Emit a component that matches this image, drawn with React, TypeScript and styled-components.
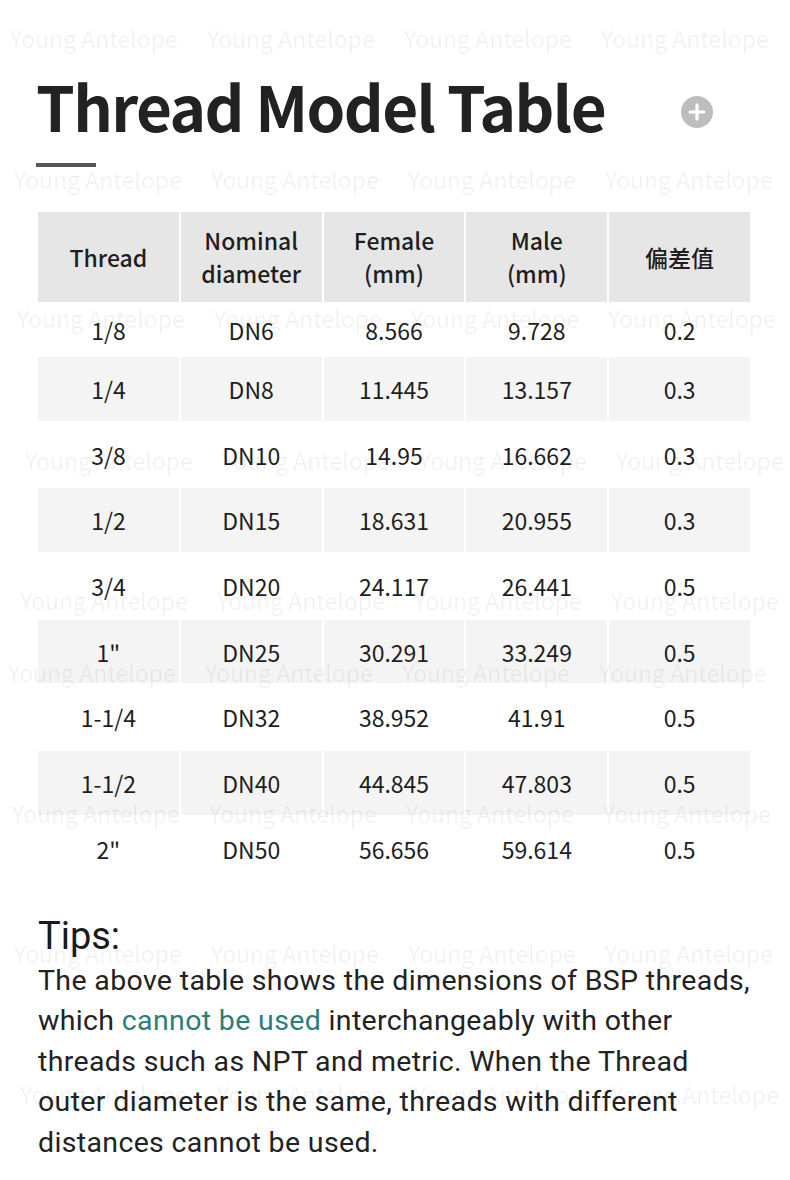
import React from 'react';
import styled, { createGlobalStyle } from 'styled-components';

const Global = createGlobalStyle`
  html, body { margin: 0; padding: 0; background: #fff; }
  body { font-family: "Noto Sans CJK SC", "Noto Sans", sans-serif; color: #1c1c1c; }
`;

const Page = styled.div`
  position: relative;
  width: 790px;
  height: 1180px;
  overflow: hidden;
  box-sizing: border-box;
  padding: 74px 0 0 36px;
`;

const TitleRow = styled.div`
  width: 677px;
  display: flex;
  justify-content: space-between;
  align-items: flex-start;
`;

const Title = styled.h1`
  margin: 0;
  font-family: "Noto Sans CJK SC", sans-serif;
  font-weight: 700;
  font-size: 62px;
  line-height: 63px;
  color: #222;
  letter-spacing: -1.6px;
`;

const PlusBadge = styled.div`
  width: 32px;
  height: 32px;
  margin-top: 22px;
  border-radius: 50%;
  background: #bdbdbd;
  display: flex;
  align-items: center;
  justify-content: center;
`;

const Bar = styled.div`
  width: 60px;
  height: 4px;
  margin-top: 26px;
  background: #555;
`;

const Table = styled.div`
  margin: 45px 0 0 2px;
  width: 712px;
  display: grid;
  grid-template-columns: repeat(5, 1fr);
  grid-template-rows: 90px 51px repeat(8, 63.7px);
  gap: 2px;
`;

const HeadCell = styled.div`
  background: #e6e6e6;
  display: flex;
  align-items: center;
  justify-content: center;
  text-align: center;
  font-size: 23px;
  line-height: 33px;
  font-weight: 500;
  color: #1e1e1e;
`;

const Cell = styled.div<{ $shade: boolean }>`
  background: ${(p) => (p.$shade ? '#f4f4f4' : '#fff')};
  display: flex;
  align-items: center;
  justify-content: center;
  font-size: 23px;
  font-weight: 400;
  color: #1e1e1e;
`;

const Tips = styled.div`
  margin: 30px 0 0 2px;
  font-family: Roboto, "Noto Sans", sans-serif;
  color: #1a1a1a;
`;

const TipsTitle = styled.div`
  font-size: 38px;
  line-height: 50px;
  font-weight: 400;
`;

const TipsText = styled.p`
  margin: 0;
  font-size: 28.5px;
  letter-spacing: 0.35px;
  line-height: 40.5px;
  font-weight: 400;
  white-space: nowrap;
  color: #222;
`;

const Accent = styled.span`
  color: #2b7d77;
`;

const Watermark = styled.div`
  position: absolute;
  inset: 0;
  pointer-events: none;
`;

const MarkRow = styled.div`
  position: absolute;
  left: 0;
  display: flex;
  gap: 32px;
`;

const Mark = styled.span`
  width: 165px;
  font-family: "Noto Sans CJK SC", sans-serif;
  font-size: 23px;
  line-height: 30px;
  color: rgba(0, 0, 0, 0.06);
  white-space: nowrap;
`;

const rows: [string, string, string, string, string][] = [
  ['1/8', 'DN6', '8.566', '9.728', '0.2'],
  ['1/4', 'DN8', '11.445', '13.157', '0.3'],
  ['3/8', 'DN10', '14.95', '16.662', '0.3'],
  ['1/2', 'DN15', '18.631', '20.955', '0.3'],
  ['3/4', 'DN20', '24.117', '26.441', '0.5'],
  ['1"', 'DN25', '30.291', '33.249', '0.5'],
  ['1-1/4', 'DN32', '38.952', '41.91', '0.5'],
  ['1-1/2', 'DN40', '44.845', '47.803', '0.5'],
  ['2"', 'DN50', '56.656', '59.614', '0.5'],
];

const marks: [number, number][] = [
  [23, 10], [164, 14], [303, 17], [445, 25], [585, 20], [657, 8], [798, 12], [938, 14], [1079, 20],
];

export default function App() {
  return (
    <>
      <Global />
      <Page>
        <TitleRow>
          <Title>Thread Model Table</Title>
          <PlusBadge>
            <svg width="18" height="18" viewBox="0 0 18 18">
              <path d="M9 2v14M2 9h14" stroke="#fff" strokeWidth="3.2" strokeLinecap="round" />
            </svg>
          </PlusBadge>
        </TitleRow>
        <Bar />
        <Table>
          <HeadCell>Thread</HeadCell>
          <HeadCell>Nominal<br />diameter</HeadCell>
          <HeadCell>Female<br />(mm)</HeadCell>
          <HeadCell>Male<br />(mm)</HeadCell>
          <HeadCell>偏差值</HeadCell>
          {rows.map((r, i) =>
            r.map((v, j) => (
              <Cell key={`${i}-${j}`} $shade={i % 2 === 1}>
                {v}
              </Cell>
            ))
          )}
        </Table>
        <Tips>
          <TipsTitle>Tips:</TipsTitle>
          <TipsText>
            The above table shows the dimensions of BSP threads,
            <br />
            which <Accent>cannot be used</Accent> interchangeably with other
            <br />
            threads such as NPT and metric. When the Thread
            <br />
            outer diameter is the same, threads with different
            <br />
            distances cannot be used.
          </TipsText>
        </Tips>
        <Watermark>
          {marks.map(([top, left], i) => (
            <MarkRow key={i} style={{ top, left }}>
              <Mark>Young Antelope</Mark>
              <Mark>Young Antelope</Mark>
              <Mark>Young Antelope</Mark>
              <Mark>Young Antelope</Mark>
            </MarkRow>
          ))}
        </Watermark>
      </Page>
    </>
  );
}
